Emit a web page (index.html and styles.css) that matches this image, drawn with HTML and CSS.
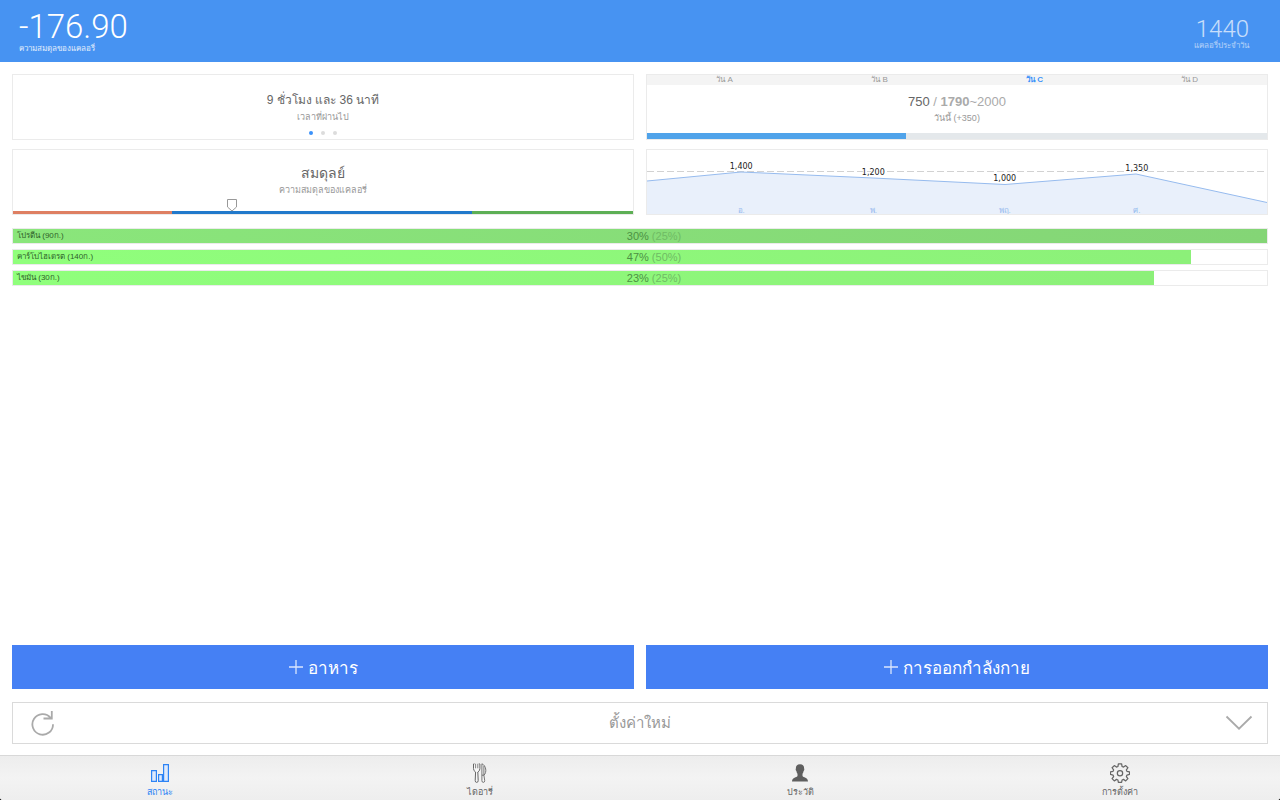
FILE: index.html
```html
<!DOCTYPE html>
<html lang="th">
<head>
<meta charset="utf-8">
<meta name="viewport" content="width=device-width, initial-scale=1">
<title>สถานะ</title>
<link rel="stylesheet" href="styles.css">
</head>
<body>
<div class="app">
  <header class="header">
    <div class="stat">
      <div class="stat-value">-176.90</div>
      <div class="stat-label">ความสมดุลของแคลอรี่</div>
    </div>
    <div class="stat stat-daily">
      <div class="stat-value">1440</div>
      <div class="stat-label">แคลอรี่ประจำวัน</div>
    </div>
  </header>

  <main class="main">
    <section class="cards">
      <article class="card">
        <div class="card-text">
          <h2 class="card-title card-title-small">9 ชั่วโมง และ 36 นาที</h2>
          <p class="card-sub">เวลาที่ผ่านไป</p>
        </div>
        <div class="dots"><i class="dot dot-on"></i><i class="dot"></i><i class="dot"></i></div>
      </article>

      <article class="card">
        <div class="days">
          <button class="day">วัน A</button>
          <button class="day">วัน B</button>
          <button class="day day-on">วัน C</button>
          <button class="day">วัน D</button>
        </div>
        <div class="card-text card-text-tight">
          <h2 class="card-title">750 <span class="target">/ <b>1790</b>~2000</span></h2>
          <p class="card-sub">วันนี้ (+350)</p>
        </div>
        <div class="progress"><div class="progress-fill" style="width:41.8%"></div></div>
      </article>

      <article class="card">
        <div class="card-text card-text-raised">
          <h2 class="card-title card-title-large">สมดุลย์</h2>
          <p class="card-sub">ความสมดุลของแคลอรี่</p>
        </div>
        <div class="balance">
          <div class="low" style="width:25.6%"></div>
          <div class="mid" style="width:48.4%"></div>
          <div class="high"></div>
          <svg class="marker" style="left:35.3%" width="12" height="14" viewBox="0 0 12 14"><path d="M1.500 1.500h9v7.500L6 13 1.500 9z" fill="#fff" stroke="#999"/></svg>
        </div>
      </article>

      <article class="card">
        <svg class="chart" role="img" aria-label="แคลอรี่รายวัน">
          <svg width="100%" height="64" viewBox="0 0 620 64" preserveAspectRatio="none">
            <path d="M0 31 94 22 226 28 358 34.500 489 24 620 52.500V64H0z" fill="#e9f0fb"/>
            <path d="M0 21.500H620" stroke="#d2d2d2" stroke-dasharray="7 3"/>
            <path d="M0 31 94 22 226 28 358 34.500 489 24 620 52.500" fill="none" stroke="#96bbee"/>
          </svg>
          <g class="chart-values">
            <text x="15.2%" y="19">1,400</text><text x="36.5%" y="25">1,200</text>
            <text x="57.7%" y="31">1,000</text><text x="79%" y="21">1,350</text>
          </g>
          <g class="chart-days">
            <text x="15.2%" y="63">อ.</text><text x="36.5%" y="63">พ.</text>
            <text x="57.7%" y="63">พฤ.</text><text x="79%" y="63">ศ.</text>
          </g>
        </svg>
      </article>
    </section>

    <section class="macros">
      <div class="macro macro-full"><div class="macro-fill" style="width:100%"></div><span class="macro-name">โปรตีน (90ก.)</span><span class="macro-share">30% <span class="goal">(25%)</span></span></div>
      <div class="macro"><div class="macro-fill" style="width:93.9%"></div><span class="macro-name">คาร์โบไฮเดรต (140ก.)</span><span class="macro-share">47% <span class="goal">(50%)</span></span></div>
      <div class="macro"><div class="macro-fill" style="width:91%"></div><span class="macro-name">ไขมัน (30ก.)</span><span class="macro-share">23% <span class="goal">(25%)</span></span></div>
    </section>

    <section class="actions">
      <button class="add"><svg width="14" height="14" viewBox="0 0 14 14"><path d="M7 0v14M0 7h14" stroke="#fff" stroke-width="1.300" opacity=".8"/></svg>อาหาร</button>
      <button class="add"><svg width="14" height="14" viewBox="0 0 14 14"><path d="M7 0v14M0 7h14" stroke="#fff" stroke-width="1.300" opacity=".8"/></svg>การออกกำลังกาย</button>
    </section>

    <button class="reset">
      <svg width="24" height="26" viewBox="0 0 24 26" fill="none" stroke="#aaa" stroke-width="1.800"><path d="M22 14.200A10.300 10.300 0 1 1 19.600 7.800M12.500 8.500h8.300V1"/></svg>
      <span>ตั้งค่าใหม่</span>
      <svg width="28" height="16" viewBox="0 0 28 16" fill="none" stroke="#aaa" stroke-width="1.800"><path d="M1.500 1.500 14 13.700 26.500 1.500"/></svg>
    </button>
  </main>

  <nav class="tabs">
    <a class="tab tab-on" href="#status">
      <svg width="20" height="20" viewBox="0 0 20 20" fill="#dfeafc" stroke="#2d84f5" stroke-width="1.200"><path d="M1.600 7.600h4.800v10.800H1.600zM8.600 11.600h3.800v6.800H8.600zM13.600 1.600h4.800v16.800h-4.800z"/></svg>
      <span>สถานะ</span>
    </a>
    <a class="tab" href="#diary">
      <svg width="20" height="20" viewBox="0 0 20 20" fill="#f7f7f7" stroke="#666" stroke-linejoin="round"><path d="M3.500 1V5.500Q3.500 8 5.600 9L5.200 17.500Q5.200 19.400 6.700 19.400T8.200 17.500L7.800 9Q9.900 8 9.900 5.500V1"/><path d="M3.500 .8H4.600M8.800 .8H9.900M5.600 .8V5.300M7.800 .8V5.300" stroke-width=".8"/><path d="M11.900 .8V17.500Q11.900 19.400 13.300 19.400T14.700 17.500L13.900 12.200C17.200 9.500 16 2.200 11.900 .8zM13.900 2.800V12.200M11.900 12.200H13.900" stroke-width=".9"/></svg>
      <span>ไดอารี่</span>
    </a>
    <a class="tab" href="#history">
      <svg width="20" height="20" viewBox="0 0 20 20" fill="#5f5f5f"><path d="M10 1.200C7.100 1.200 5.700 2.800 5.900 5.500 5.400 5.700 5.700 7.700 6.400 8 6.700 9.500 7 10.200 7.500 10.800V13C6.800 14.600 2.200 14.200 2 18.500H18C17.800 14.200 13.200 14.600 12.500 13V10.800C13 10.200 13.300 9.500 13.600 8 14.300 7.700 14.600 5.700 14.100 5.500 14.300 2.800 12.900 1.200 10 1.200z"/></svg>
      <span>ประวัติ</span>
    </a>
    <a class="tab" href="#settings">
      <svg width="20" height="20" viewBox="0.500 0.500 21 21" fill="none" stroke="#666" stroke-width="1.300" stroke-linejoin="round"><path d="M9.300 1.500h3.400l.5 2.700 1.500.6 2.300-1.600 2.300 2.300-1.600 2.300.6 1.500 2.700.5v2.700l-2.700.7-.6 1.500 1.600 2.200-2.300 2.400-2.300-1.600-1.500.6-.5 2.500H9.300l-.5-2.500-1.500-.6L5 19.300l-2.300-2.400 1.600-2.200-.6-1.500L1 12.500V9.800l2.700-.5.6-1.500-1.600-2.300L5 3.200l2.300 1.600 1.500-.6z"/><circle cx="11" cy="11.200" r="2.800"/></svg>
      <span>การตั้งค่า</span>
    </a>
  </nav>
</div>
</body>
</html>
```
FILE: styles.css
```css
* { box-sizing: border-box; }
body { margin: 0; background: #000; font-family: "Liberation Sans", sans-serif; color: #666; }
h2, p { margin: 0; font-weight: 400; }
button { font: inherit; color: inherit; border: 0; padding: 0; background: none; cursor: pointer; }
svg { display: block; flex: none; }

.app { min-height: 100vh; display: flex; flex-direction: column; background: #fff; border-radius: 0 0 3px 3px; overflow: hidden; }

.header { display: flex; justify-content: space-between; min-height: 62px; padding: 10px 31px 0 19px; background: #4793f2; color: #fff; }
.stat-value { font-family: Roboto, sans-serif; font-weight: 300; font-size: 33px; line-height: 34px; }
.stat-label { font-size: 8px; line-height: 10px; opacity: .85; }
.stat-daily { padding-top: 7px; text-align: right; opacity: .7; }
.stat-daily .stat-value { font-size: 24px; line-height: 24px; }

.main { flex: 1; display: flex; flex-direction: column; padding: 12px 12px 11px; }
.cards { display: grid; grid-template-columns: 1fr 1fr; gap: 9px 12px; }
.card { display: flex; flex-direction: column; min-width: 0; min-height: 66px; border: 1px solid #ebebeb; }
.card-text { padding-top: 17px; text-align: center; }
.card-text-tight { padding-top: 8px; }
.card-text-raised { padding-top: 15px; }
.card-title { font-size: 13px; line-height: 17px; }
.card-title-small { font-size: 12px; }
.card-title-large { font-size: 14px; }
.card-sub { font-size: 9px; line-height: 16px; color: #999; }
.target { color: #aaa; }

.dots { display: flex; justify-content: center; gap: 8px; padding-top: 6px; }
.dot { width: 4px; height: 4px; border-radius: 50%; background: #dcdcdc; }
.dot-on { background: #3b92fa; }

.days { display: grid; grid-template-columns: repeat(4, 1fr); background: #f4f4f4; }
.day { height: 10px; font-size: 8px; line-height: 10px; color: #999; }
.day-on { color: #3b92fa; font-weight: 700; }

.progress { height: 6px; margin-top: auto; background: #e4e8eb; }
.progress-fill { height: 100%; background: #50a3ea; }

.balance { position: relative; display: flex; height: 3px; margin-top: auto; }
.low { background: #de7f62; }
.mid { background: #2179cb; }
.high { flex: 1; background: #5daf55; }
.marker { position: absolute; bottom: 2px; transform: translateX(-50%); }

.chart { width: 100%; height: 64px; text-anchor: middle; }
.chart-values { font: 8px "DejaVu Sans", sans-serif; fill: #222; stroke: #fff; stroke-width: 2px; paint-order: stroke; }
.chart-days { font-size: 8px; fill: #96bbee; }

.macros { display: grid; gap: 5px; padding-top: 13px; }
.macro { display: grid; align-items: center; min-height: 16px; border: 1px solid #ebebeb; }
.macro > * { grid-area: 1 / 1; }
.macro-fill { height: 14px; background: linear-gradient(90deg, #90ff7c, #8cf079); }
.macro-full .macro-fill { background: linear-gradient(90deg, #8ae67b, #84d576); }
.macro-name { padding-left: 4px; font-size: 8px; line-height: 14px; color: #2f5f2a; }
.macro-share { padding-left: 28px; text-align: center; font-size: 11px; line-height: 14px; color: #4c9143; }
.goal { color: #6fbb64; }

.actions { display: grid; grid-template-columns: 1fr 1fr; gap: 12px; margin-top: auto; }
.add { display: flex; align-items: center; justify-content: center; gap: 5px; min-height: 44px; background: #4580f4; color: #fff; font-size: 17px; }
.reset { display: flex; align-items: center; justify-content: space-between; min-height: 42px; margin-top: 13px; padding: 0 14px 0 18px; border: 1px solid #dadada; color: #999; font-size: 15px; }

.tabs { display: grid; grid-template-columns: repeat(4, 1fr); min-height: 45px; border-top: 1px solid #d8d8d8; background: linear-gradient(#ededed, #f3f3f3 50%, #eee); }
.tab { display: flex; flex-direction: column; align-items: center; justify-content: flex-end; gap: 3px; padding-bottom: 2px; color: #666; font-size: 9px; line-height: 12px; text-decoration: none; }
.tab-on { color: #2d84f5; }
```
